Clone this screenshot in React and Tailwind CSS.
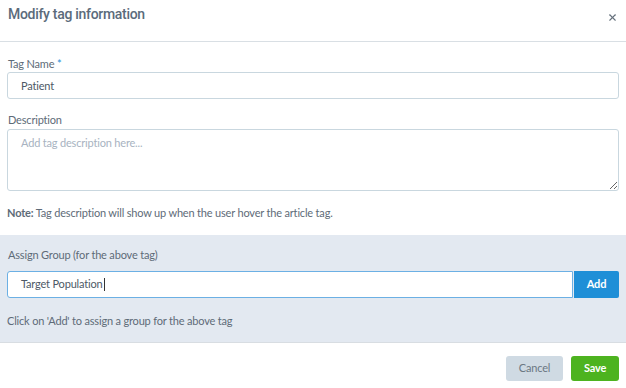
import React from 'react';
import { X } from 'lucide-react';

export default function App() {
  return (
    <div className="w-[626px] h-[388px] bg-white text-[#5a6878] overflow-hidden font-['Lato',sans-serif] text-[11px] tracking-[-0.18px]">
      <div className="h-[42px] flex items-start justify-between pl-[8px] pr-[8px] border-b border-[#d9dfe4]">
        <h1 className="mt-[4px] leading-[20px] text-[14px] font-medium tracking-[-0.3px] text-[#5b6b7b] font-['Roboto',sans-serif]">
          Modify tag information
        </h1>
        <X size={11} strokeWidth={2.4} className="mt-[12px] text-[#66717c]" />
      </div>

      <div className="px-[7px] pt-[15px] pb-[15px]">
        <label className="block leading-[14px] text-[#5e6b78] mb-[1px] ml-px">
          Tag Name <span className="text-[#2a8fd8]">*</span>
        </label>
        <input
          defaultValue="Patient"
          className="w-full h-[27px] border border-[#c9d7df] rounded-[3px] px-[13px] text-[11px] text-[#4d5966] outline-none"
        />

        <label className="block leading-[14px] text-[#5e6b78] mt-[14px] mb-[2px] ml-px">Description</label>
        <textarea
          placeholder="Add tag description here..."
          className="block w-full h-[62px] border border-[#c9d7df] rounded-[3px] px-[13px] py-[5px] text-[11px] text-[#4d5966] placeholder:text-[#a8b3c1] outline-none"
        />

        <p className="leading-[14px] text-[#5e6b78] mt-[15px]">
          <span className="font-bold">Note:</span> Tag description will show up when the user hover the article tag.
        </p>
      </div>

      <div className="bg-[#e3e9f1] border-b border-[#d8dde2] h-[108px] px-[7px] pt-[13px]">
        <label className="block leading-[14px] text-[#5e6b78] mb-[9px] ml-px">Assign Group (for the above tag)</label>
        <div className="flex h-[27px] gap-[1px]">
          <div className="flex-1 bg-white border border-[#6cb0e4] rounded-l-[3px] px-[13px] flex items-center text-[#4d5966]">
            Target Population<span className="inline-block w-px h-[13px] bg-[#333] ml-px" />
          </div>
          <button className="w-[45px] bg-[#1f8fd7] text-white font-bold rounded-r-[2px]">Add</button>
        </div>
        <p className="leading-[14px] text-[#5e6b78] mt-[16px]">Click on 'Add' to assign a group for the above tag</p>
      </div>

      <div className="flex justify-end gap-[8px] pr-[7px] pt-[13px]">
        <button className="w-[57px] h-[25px] bg-[#cfdae3] text-[#6b7782] rounded-[3px]">Cancel</button>
        <button className="w-[48px] h-[25px] bg-[#4db31f] text-white font-bold rounded-[3px]">Save</button>
      </div>
    </div>
  );
}
